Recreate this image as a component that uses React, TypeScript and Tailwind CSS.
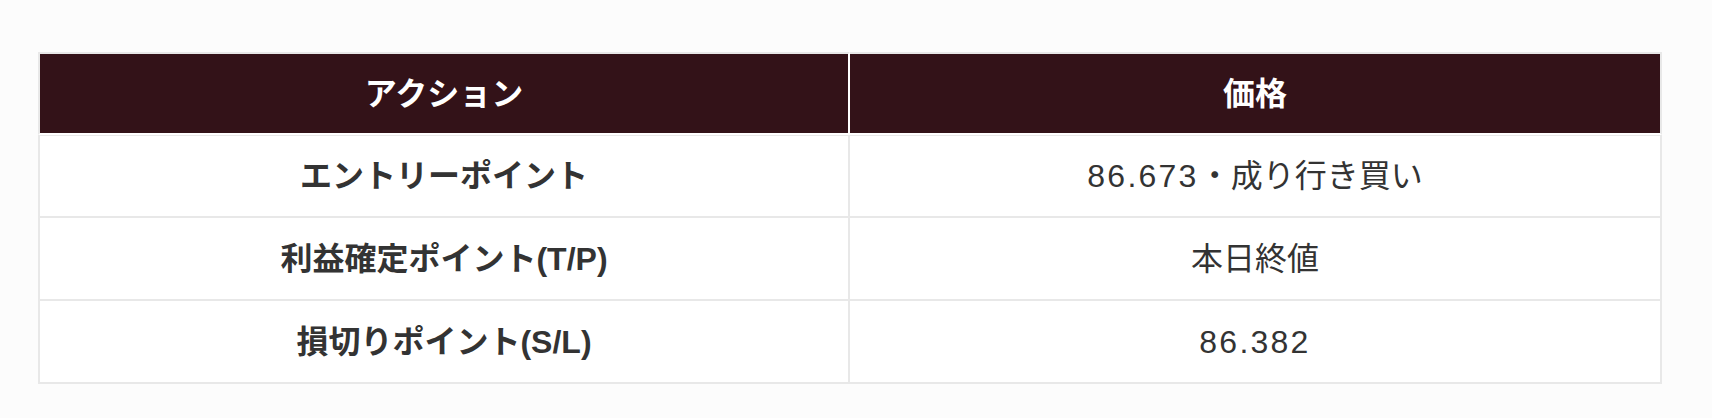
import React from "react"

type Row = {
	action: string
	price: string
}

const rows: Row[] = [
	{ action: "エントリーポイント", price: "86.673・成り行き買い" },
	{ action: "利益確定ポイント(T/P)", price: "本日終値" },
	{ action: "損切りポイント(S/L)", price: "86.382" }
]

// digits in the original font run wider than Liberation Sans, so space them out a little
const renderPrice = (text: string) =>
	text.split(/([0-9.]+)/).map((part, i) =>
		/^[0-9.]+$/.test(part) ? (
			<span key={i} className="tracking-[0.07em]">
				{part}
			</span>
		) : (
			<span key={i}>{part}</span>
		)
	)

const App: React.FC = () => {
	return (
		<div
			className="min-h-[418px] w-full bg-[#fcfcfc] pl-[38px] pt-[52px]"
			style={{ fontFamily: '"Liberation Sans", "Noto Sans CJK JP", sans-serif' }}
		>
			<table className="w-[1624px] table-fixed border-separate border-spacing-0 text-[32px] leading-none text-[#333333]">
				<thead>
					<tr>
						<th className="h-[83px] w-1/2 border-t-2 border-l-2 border-r-2 border-b-2 border-t-[#e8e8e8] border-l-[#e8e8e8] border-r-white border-b-white bg-[#331218] font-bold text-white">
							アクション
						</th>
						<th className="h-[83px] w-1/2 border-t-2 border-r-2 border-b-2 border-t-[#e8e8e8] border-r-[#e8e8e8] border-b-white bg-[#331218] font-bold text-white">
							価格
						</th>
					</tr>
				</thead>
				<tbody>
					{rows.map((row, i) => (
						<tr key={i}>
							{/* Action */}
							<td
								className={`h-[83px] border-l-2 border-r-2 border-b-2 border-[#e8e8e8] bg-white text-center font-bold ${
									i === 0 ? "border-t" : ""
								}`}
							>
								{row.action}
							</td>
							{/* Price */}
							<td
								className={`h-[83px] border-r-2 border-b-2 border-[#e8e8e8] bg-white text-center ${
									i === 0 ? "border-t" : ""
								}`}
							>
								{renderPrice(row.price)}
							</td>
						</tr>
					))}
				</tbody>
			</table>
		</div>
	)
}

export default App
